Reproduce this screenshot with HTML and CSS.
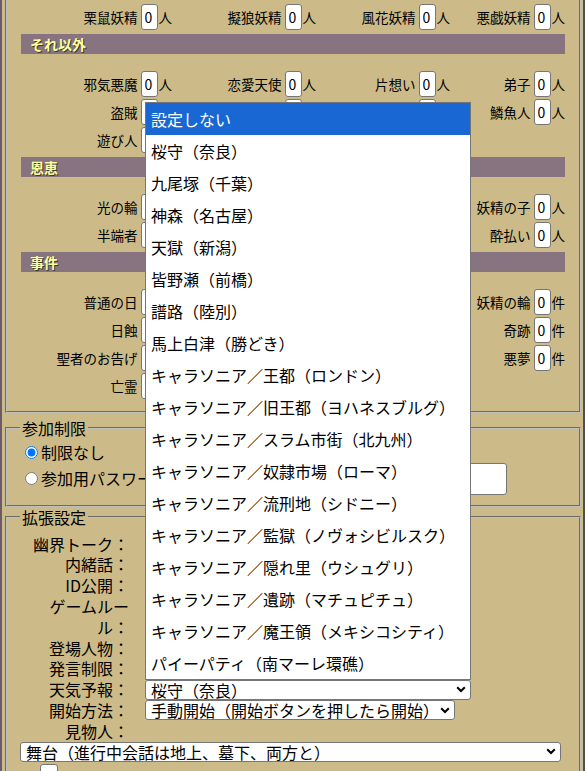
FILE: index.html
```html
<!DOCTYPE html>
<html lang="ja">
<head>
    <meta charset="UTF-8">
    <meta name="viewport" content="width=device-width, initial-scale=1.0">
    <title>村の設定</title>
    <link rel="stylesheet" href="styles.css">
</head>
<body>
<div class="page">
    <fieldset class="box cut">
        <div class="counts">
            <div class="cell"><label>栗鼠妖精</label><input class="num" value="0"><span>人</span></div>
            <div class="cell"><label>擬狼妖精</label><input class="num" value="0"><span>人</span></div>
            <div class="cell"><label>風花妖精</label><input class="num" value="0"><span>人</span></div>
            <div class="cell"><label>悪戯妖精</label><input class="num" value="0"><span>人</span></div>

            <h3 class="bar">それ以外</h3>
            <div class="cell"><label>邪気悪魔</label><input class="num" value="0"><span>人</span></div>
            <div class="cell"><label>恋愛天使</label><input class="num" value="0"><span>人</span></div>
            <div class="cell"><label>片想い</label><input class="num" value="0"><span>人</span></div>
            <div class="cell"><label>弟子</label><input class="num" value="0"><span>人</span></div>
            <div class="cell"><label>盗賊</label><input class="num" value="0"><span>人</span></div>
            <div class="cell"><label>喰人鬼</label><input class="num" value="0"><span>人</span></div>
            <div class="cell"><label>求婚者</label><input class="num" value="0"><span>人</span></div>
            <div class="cell"><label>鱗魚人</label><input class="num" value="0"><span>人</span></div>
            <div class="cell"><label>遊び人</label><input class="num" value="0"><span>人</span></div>
            <div class="cell"><label>道化師</label><input class="num" value="0"><span>人</span></div>
            <div class="cell"><label>宿借り</label><input class="num" value="0"><span>人</span></div>
            <div class="cell"></div>

            <h3 class="bar">恩恵</h3>
            <div class="cell"><label>光の輪</label><input class="num" value="0"><span>人</span></div>
            <div class="cell"><label>能力者</label><input class="num" value="0"><span>人</span></div>
            <div class="cell"><label>保険屋</label><input class="num" value="0"><span>人</span></div>
            <div class="cell"><label>妖精の子</label><input class="num" value="0"><span>人</span></div>
            <div class="cell"><label>半端者</label><input class="num" value="0"><span>人</span></div>
            <div class="cell"><label>悪鬼</label><input class="num" value="0"><span>人</span></div>
            <div class="cell"><label>王子様</label><input class="num" value="0"><span>人</span></div>
            <div class="cell"><label>酔払い</label><input class="num" value="0"><span>人</span></div>

            <h3 class="bar">事件</h3>
            <div class="cell"><label>普通の日</label><input class="num" value="0"><span>件</span></div>
            <div class="cell"><label>新月</label><input class="num" value="0"><span>件</span></div>
            <div class="cell"><label>満月</label><input class="num" value="0"><span>件</span></div>
            <div class="cell"><label>妖精の輪</label><input class="num" value="0"><span>件</span></div>
            <div class="cell"><label>日蝕</label><input class="num" value="0"><span>件</span></div>
            <div class="cell"><label>洪水</label><input class="num" value="0"><span>件</span></div>
            <div class="cell"><label>降霊会</label><input class="num" value="0"><span>件</span></div>
            <div class="cell"><label>奇跡</label><input class="num" value="0"><span>件</span></div>
            <div class="cell"><label>聖者のお告げ</label><input class="num" value="0"><span>件</span></div>
            <div class="cell"><label>影響力</label><input class="num" value="0"><span>件</span></div>
            <div class="cell"><label>狼の夜</label><input class="num" value="0"><span>件</span></div>
            <div class="cell"><label>悪夢</label><input class="num" value="0"><span>件</span></div>
            <div class="cell"><label>亡霊</label><input class="num" value="0"><span>件</span></div>
            <div class="cell"><label>濃霧</label><input class="num" value="0"><span>件</span></div>
            <div class="cell"><label>裏切り</label><input class="num" value="0"><span>件</span></div>
            <div class="cell"></div>
        </div>
    </fieldset>

    <fieldset class="box entry">
        <legend>参加制限</legend>
        <label class="opt"><input type="radio" name="entry" checked>制限なし</label>
        <label class="opt"><input type="radio" name="entry">参加用パスワード<input type="text" class="pass"></label>
    </fieldset>

    <fieldset class="box extra">
        <legend>拡張設定</legend>
        <div class="ext">
            <div class="key">幽界トーク：</div><div class="val"><input type="checkbox"></div>
            <div class="key">内緒話：</div><div class="val"><input type="checkbox"></div>
            <div class="key">ID公開：</div><div class="val"><input type="checkbox"></div>
            <div class="key">ゲームルール：</div>
            <div class="val"><div class="sel"><span>タブラの人狼</span><svg width="10" height="7" viewBox="0 0 10 7"><path d="M1.2 1.2 5 5 8.8 1.2" fill="none" stroke="#000" stroke-width="2"/></svg></div></div>
            <div class="key">登場人物：</div>
            <div class="val"><div class="sel"><span>ちゃんと</span><svg width="10" height="7" viewBox="0 0 10 7"><path d="M1.2 1.2 5 5 8.8 1.2" fill="none" stroke="#000" stroke-width="2"/></svg></div></div>
            <div class="key">発言制限：</div>
            <div class="val"><div class="sel"><span>人狼議事</span><svg width="10" height="7" viewBox="0 0 10 7"><path d="M1.2 1.2 5 5 8.8 1.2" fill="none" stroke="#000" stroke-width="2"/></svg></div></div>
            <div class="key">天気予報：</div>
            <div class="val"><div class="sel weather"><span>桜守（奈良）</span><svg width="10" height="7" viewBox="0 0 10 7"><path d="M1.2 1.2 5 5 8.8 1.2" fill="none" stroke="#000" stroke-width="2"/></svg></div></div>
            <div class="key">開始方法：</div>
            <div class="val"><div class="sel start"><span>手動開始（開始ボタンを押したら開始）</span><svg width="10" height="7" viewBox="0 0 10 7"><path d="M1.2 1.2 5 5 8.8 1.2" fill="none" stroke="#000" stroke-width="2"/></svg></div></div>
            <div class="key">見物人：</div><div class="val"></div>
            <div class="wide"><div class="sel stage"><span>舞台（進行中会話は地上、墓下、両方と）</span><svg width="10" height="7" viewBox="0 0 10 7"><path d="M1.2 1.2 5 5 8.8 1.2" fill="none" stroke="#000" stroke-width="2"/></svg></div></div>
            <div class="wide"><input type="text" class="tiny"></div>
        </div>
    </fieldset>

    <!-- open list of the 天気予報 select -->
    <ul class="popup">
        <li class="on">設定しない</li>
        <li>桜守（奈良）</li>
        <li>九尾塚（千葉）</li>
        <li>神森（名古屋）</li>
        <li>天獄（新潟）</li>
        <li>皆野瀬（前橋）</li>
        <li>譜路（陸別）</li>
        <li>馬上白津（勝どき）</li>
        <li>キャラソニア／王都（ロンドン）</li>
        <li>キャラソニア／旧王都（ヨハネスブルグ）</li>
        <li>キャラソニア／スラム市街（北九州）</li>
        <li>キャラソニア／奴隷市場（ローマ）</li>
        <li>キャラソニア／流刑地（シドニー）</li>
        <li>キャラソニア／監獄（ノヴォシビルスク）</li>
        <li>キャラソニア／隠れ里（ウシュグリ）</li>
        <li>キャラソニア／遺跡（マチュピチュ）</li>
        <li>キャラソニア／魔王領（メキシコシティ）</li>
        <li>パイーパティ（南マーレ環礁）</li>
    </ul>
</div>
</body>
</html>
```

FILE: styles.css
```css
body {
    margin: 0;
    background: #ccbb88;
    font-family: "Noto Sans CJK JP", "Noto Sans", sans-serif;
    font-size: 16px;
    line-height: 20.8px;
    color: #000;
    overflow: hidden;
}

.page {
    position: relative;
    min-height: 100vh;
    border-left: 2px solid #6b5b68;
    border-right: 2px solid #505050;
}

.box {
    margin: 0 2px 0 3px;
    padding: 5px 12px 10px 13px;
    border: 2px groove #c0c0c0;
}

.box legend {
    padding: 0 2px;
}

.cut {
    border-top: none;
    padding-top: 4px;
    padding-bottom: 12px;
}

/* role / event counts */
.counts {
    display: grid;
    grid-template-columns: 151px 142px 132px 1fr;
    gap: 2px;
    margin: 0 2px 0 1px;
    font-size: 13.5px;
}

.cell {
    display: flex;
    justify-content: flex-end;
    align-items: center;
    height: 26px;
    white-space: nowrap;
}

.cell label {
    margin-right: 3px;
}

.cell span {
    margin-left: 1px;
}

.num {
    box-sizing: border-box;
    width: 17px;
    height: 26px;
    padding: 0 0 0 3px;
    border: 1px solid #767676;
    border-radius: 3px;
    background: #fff;
    font-family: inherit;
    font-size: 14px;
}

.bar {
    grid-column: 1 / -1;
    margin: 2px 0 15px;
    height: 20px;
    padding-left: 9px;
    background: #877480;
    color: #ffffa0;
    font-size: 14px;
    line-height: 20px;
    text-shadow: 1px 1px 0 #3c3a1c;
}

/* entry restriction */
.entry {
    margin-top: 5px;
    padding-top: 3px;
}

.opt {
    display: flex;
    align-items: center;
    min-height: 21px;
    white-space: nowrap;
}

.opt input[type="radio"] {
    margin: 0 3px 0 5px;
}

.pass {
    box-sizing: border-box;
    width: 334px;
    height: 32px;
    margin-left: 4px;
    border: 1px solid #767676;
    border-radius: 3px;
    background: #fff;
}

/* extended settings */
.extra {
    padding-top: 6px;
}

.ext {
    display: grid;
    grid-template-columns: 109px 1fr;
    column-gap: 16px;
}

.key {
    text-align: right;
}

.val {
    display: flex;
    align-items: center;
}

.val input[type="checkbox"] {
    margin: 0 3px 0 4px;
}

.wide {
    grid-column: 1 / -1;
}

.sel {
    box-sizing: border-box;
    display: flex;
    justify-content: space-between;
    align-items: center;
    height: 20px;
    padding: 0 4px 0 5px;
    border: 1px solid #767676;
    border-radius: 3px;
    background: #fff;
    line-height: 18px;
    white-space: nowrap;
    overflow: hidden;
}

.sel svg {
    flex: none;
}

.weather {
    width: 326px;
}

.start {
    width: 310px;
}

.stage {
    width: 541px;
}

.tiny {
    box-sizing: border-box;
    width: 18px;
    height: 22px;
    margin: 2px 0 0 20px;
    border: 1px solid #767676;
    border-radius: 3px;
    background: #fff;
}

/* dropdown list drawn over the form */
.popup {
    position: absolute;
    top: 102px;
    left: 143px;
    width: 326px;
    margin: 0;
    padding: 0;
    list-style: none;
    box-sizing: border-box;
    background: #fff;
    border: 1px solid #767676;
}

.popup li {
    height: 32px;
    padding-left: 5px;
    line-height: 32px;
    font-size: 16px;
    white-space: nowrap;
}

.popup .on {
    background: #1967d2;
    color: #fff;
}
```
